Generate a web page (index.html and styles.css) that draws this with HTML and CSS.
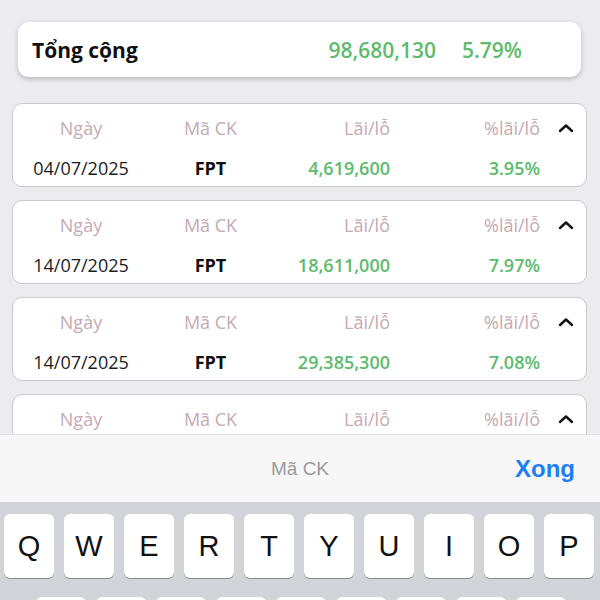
FILE: index.html
```html
<!DOCTYPE html>
<html lang="vi">
<head>
    <meta charset="UTF-8">
    <title>Lãi/lỗ</title>
    <link rel="stylesheet" href="styles.css">
</head>
<body>
<div class="app">
    <div class="content">
        <div class="total">
            <span class="total-label">Tổng cộng</span>
            <span class="total-value">98,680,130</span>
            <span class="total-pct">5.79%</span>
        </div>
        <ul class="list">
            <li class="card">
                <span class="head">Ngày</span>
                <span class="head">Mã CK</span>
                <span class="head right">Lãi/lỗ</span>
                <span class="head right">%lãi/lỗ</span>
                <span class="caret"><svg width="16" height="10" viewBox="0 0 16 10"><polyline points="2,8 8,2.5 14,8" fill="none" stroke="#111" stroke-width="2.4" stroke-linecap="round" stroke-linejoin="round"/></svg></span>
                <span class="date">04/07/2025</span>
                <span class="code">FPT</span>
                <span class="num right">4,619,600</span>
                <span class="num right">3.95%</span>
                <span></span>
            </li>
            <li class="card">
                <span class="head">Ngày</span>
                <span class="head">Mã CK</span>
                <span class="head right">Lãi/lỗ</span>
                <span class="head right">%lãi/lỗ</span>
                <span class="caret"><svg width="16" height="10" viewBox="0 0 16 10"><polyline points="2,8 8,2.5 14,8" fill="none" stroke="#111" stroke-width="2.4" stroke-linecap="round" stroke-linejoin="round"/></svg></span>
                <span class="date">14/07/2025</span>
                <span class="code">FPT</span>
                <span class="num right">18,611,000</span>
                <span class="num right">7.97%</span>
                <span></span>
            </li>
            <li class="card">
                <span class="head">Ngày</span>
                <span class="head">Mã CK</span>
                <span class="head right">Lãi/lỗ</span>
                <span class="head right">%lãi/lỗ</span>
                <span class="caret"><svg width="16" height="10" viewBox="0 0 16 10"><polyline points="2,8 8,2.5 14,8" fill="none" stroke="#111" stroke-width="2.4" stroke-linecap="round" stroke-linejoin="round"/></svg></span>
                <span class="date">14/07/2025</span>
                <span class="code">FPT</span>
                <span class="num right">29,385,300</span>
                <span class="num right">7.08%</span>
                <span></span>
            </li>
            <li class="card">
                <span class="head">Ngày</span>
                <span class="head">Mã CK</span>
                <span class="head right">Lãi/lỗ</span>
                <span class="head right">%lãi/lỗ</span>
                <span class="caret"><svg width="16" height="10" viewBox="0 0 16 10"><polyline points="2,8 8,2.5 14,8" fill="none" stroke="#111" stroke-width="2.4" stroke-linecap="round" stroke-linejoin="round"/></svg></span>
            </li>
        </ul>
    </div>
    <div class="toolbar">
        <span class="toolbar-title">Mã CK</span>
        <span class="done">Xong</span>
    </div>
    <div class="keyboard">
        <div class="row">
            <span class="key">Q</span>
            <span class="key">W</span>
            <span class="key">E</span>
            <span class="key">R</span>
            <span class="key">T</span>
            <span class="key">Y</span>
            <span class="key">U</span>
            <span class="key">I</span>
            <span class="key">O</span>
            <span class="key">P</span>
        </div>
        <!-- hàng thứ hai chỉ lộ mép trên -->
        <div class="row row-2">
            <span class="key"></span>
            <span class="key"></span>
            <span class="key"></span>
            <span class="key"></span>
            <span class="key"></span>
            <span class="key"></span>
            <span class="key"></span>
            <span class="key"></span>
            <span class="key"></span>
        </div>
    </div>
</div>
</body>
</html>
```

FILE: styles.css
```css
* {
    padding: 0;
    margin: 0;
    list-style: none;
    box-sizing: border-box;
}
body {
    background: #ebebf0;
    font-family: "Open Sans", "Noto Sans", sans-serif;
}
.app {
    width: 600px;
    height: 600px;
    display: flex;
    flex-direction: column;
    overflow: hidden;
}
.content {
    flex: none;
    height: 434px;
    overflow: hidden;
    padding-top: 22px;
}
.total {
    display: flex;
    align-items: center;
    height: 55px;
    margin: 0 19px 0 18px;
    padding: 0 59px 0 14px;
    background: #fff;
    border-radius: 11px;
    box-shadow: 0 2px 5px rgba(0, 0, 0, 0.22);
    font-size: 21px;
}
.total-label {
    flex: 1;
    font-weight: 700;
    color: #111;
}
.total-value,
.total-pct {
    font-weight: 600;
    color: #5dbb6d;
}
.total-pct {
    margin-left: 26px;
}
.list {
    display: flex;
    flex-direction: column;
    gap: 13px;
    margin: 26px 13px 0 12px;
}
.card {
    display: grid;
    grid-template-columns: 136px 123px 118px 150px 1fr;
    grid-auto-rows: 26px;
    row-gap: 14px;
    align-items: center;
    flex: none;
    height: 84px;
    padding: 11px 0 5px;
    background: #fff;
    border: 1px solid #c8c8ce;
    border-radius: 10px;
    font-size: 18px;
}
.card span {
    text-align: center;
    line-height: 26px;
    white-space: nowrap;
}
.card .right {
    text-align: right;
}
.head {
    color: #c6a9b3;
}
.caret {
    display: flex;
    justify-content: flex-end;
    padding-right: 12px;
}
.caret svg {
    display: block;
}
.date {
    color: #1c1c1c;
}
.code {
    font-weight: 700;
    color: #111;
}
.num {
    font-weight: 600;
    color: #5dbb6d;
}
.toolbar {
    flex: none;
    height: 68px;
    display: flex;
    align-items: center;
    justify-content: center;
    position: relative;
    background: #f7f7f7;
    border-top: 1px solid #e2e2e4;
    font-family: "Liberation Sans", Arial, sans-serif;
}
.toolbar-title {
    font-size: 19px;
    color: #9b9b9b;
}
.done {
    position: absolute;
    right: 25px;
    top: 50%;
    margin-top: -15px;
    line-height: 30px;
    font-size: 24px;
    font-weight: 700;
    color: #1e7ff2;
}
.keyboard {
    flex: 1;
    min-height: 0;
    overflow: hidden;
    background: #d2d4da;
    padding: 12px 0 0 4px;
    display: flex;
    flex-direction: column;
    gap: 19px;
}
.row {
    flex: none;
    display: flex;
    gap: 10px;
}
.row-2 {
    padding-left: 32px;
}
.key {
    width: 50px;
    height: 64px;
    flex: none;
    display: flex;
    align-items: center;
    justify-content: center;
    background: #fff;
    border-radius: 6px;
    box-shadow: 0 1px 0 #8a8c90;
    font-family: "Liberation Sans", Arial, sans-serif;
    font-size: 29px;
    color: #111;
}
```
